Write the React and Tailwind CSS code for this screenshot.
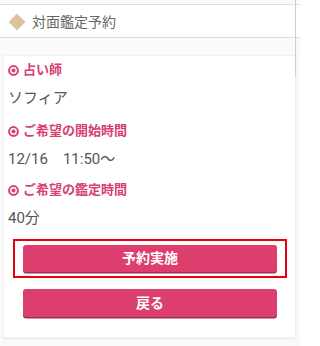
const items = [
  { label: "占い師", value: "ソフィア" },
  { label: "ご希望の開始時間", value: "12/16　11:50～" },
  { label: "ご希望の鑑定時間", value: "40分" },
];

function TargetIcon() {
  return (
    <svg width="11" height="11" viewBox="0 0 11 11" className="shrink-0">
      <circle cx="5.5" cy="5.5" r="4.4" fill="none" stroke="#d8406f" strokeWidth="2" />
      <circle cx="5.5" cy="5.5" r="2" fill="#d8406f" />
    </svg>
  );
}

export default function App() {
  return (
    <div
      className="relative min-h-[346px] w-[300px] bg-[#fafafa] pt-[4px]"
      style={{ fontFamily: 'Roboto, "Noto Sans CJK JP", sans-serif' }}
    >
      <div className="absolute right-[4px] top-0 h-[77px] w-px bg-[#cfcfcf]" />

      <header className="flex h-[34px] items-center gap-[9px] border-y border-[#ecd9c8] bg-white pl-[11px] pt-[2px]">
        <span className="block h-[12px] w-[12px] rotate-45 rounded-[1px] bg-[#dcc2a4]" />
        <h1 className="text-[14px] leading-5 text-[#666]">対面鑑定予約</h1>
      </header>

      <section className="ml-[3px] mr-[4px] mt-[17px] border border-[#f0f0f0] bg-white pb-[20px] pt-[4px] shadow-[0_1px_2px_rgba(0,0,0,0.06)]">
        <dl className="pl-[4px]">
          {items.map((item, i) => (
            <div key={item.label} className={i === 0 ? "" : i === 1 ? "mt-[13px]" : "mt-[11px]"}>
              <dt className="flex h-5 items-center gap-[4px] text-[13px] font-bold leading-5 text-[#d8406f]">
                <TargetIcon />
                {item.label}
              </dt>
              <dd className="mt-2 h-5 text-[15px] leading-5 text-[#555]">{item.value}</dd>
            </div>
          ))}
        </dl>

        <div className="ml-[9px] mr-[8px] mt-[11px] border-2 border-[#e60012] px-2 py-1">
          <button className="block h-[27px] w-full rounded-[3px] bg-[#dc3e6d] text-[14px] font-bold text-white shadow-[0_1.5px_0_#9e2f55]">
            予約実施
          </button>
        </div>

        <button className="ml-[19px] mt-[11px] block h-[28px] w-[254px] rounded-[3px] bg-[#dc3e6d] text-[14px] font-bold text-white shadow-[0_1.5px_0_#9e2f55]">
          戻る
        </button>
      </section>
    </div>
  );
}
